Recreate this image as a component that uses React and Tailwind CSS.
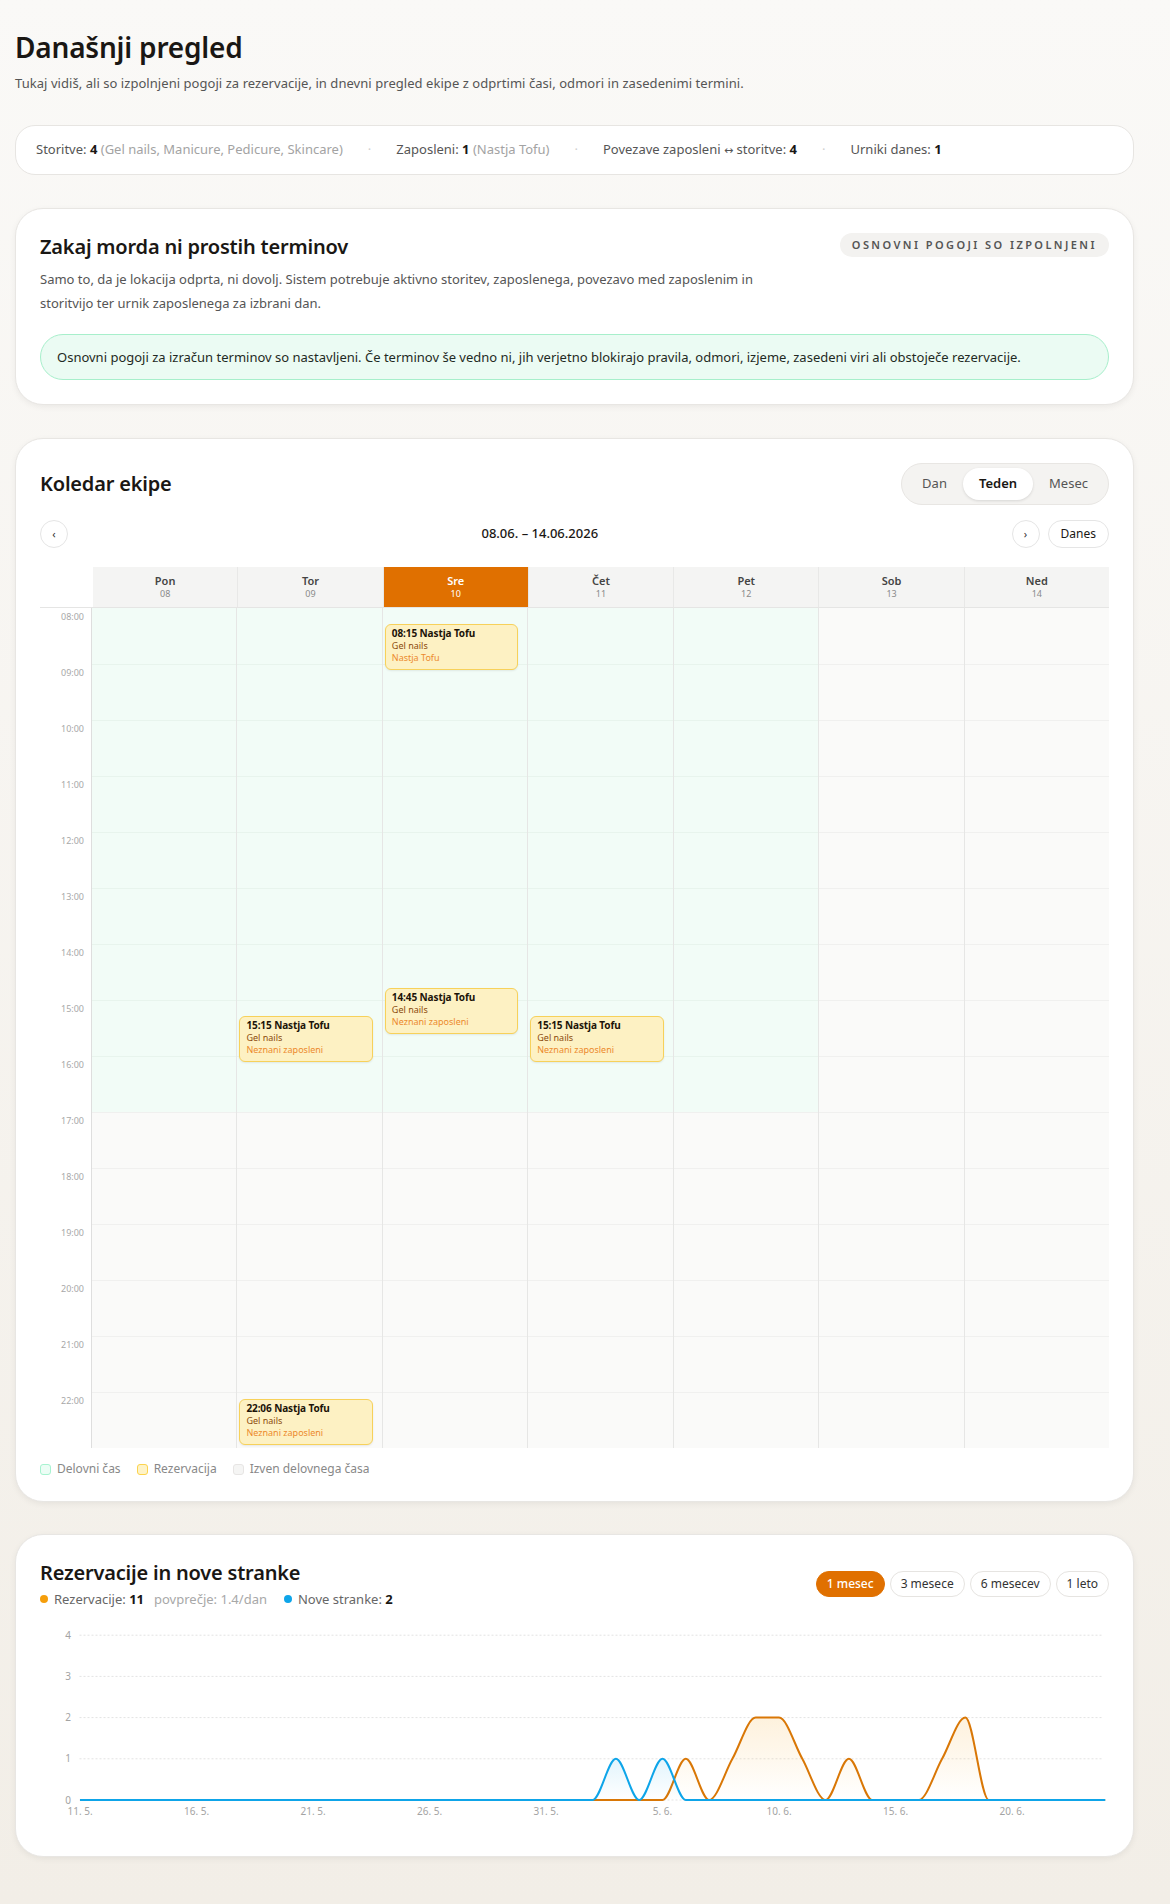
import React from 'react';

const DAYS = [
  { name: 'Pon', date: '08', work: true },
  { name: 'Tor', date: '09', work: true },
  { name: 'Sre', date: '10', work: true, today: true },
  { name: 'Čet', date: '11', work: true },
  { name: 'Pet', date: '12', work: true },
  { name: 'Sob', date: '13', work: false },
  { name: 'Ned', date: '14', work: false },
];

const HOURS = Array.from({ length: 15 }, (_, i) => 8 + i);
const HOUR_PX = 56;
const WORK_END = 17;

const EVENTS = [
  { day: 2, time: '08:15', service: 'Gel nails', staff: 'Nastja Tofu' },
  { day: 2, time: '14:45', service: 'Gel nails', staff: 'Neznani zaposleni' },
  { day: 1, time: '15:15', service: 'Gel nails', staff: 'Neznani zaposleni' },
  { day: 3, time: '15:15', service: 'Gel nails', staff: 'Neznani zaposleni' },
  { day: 1, time: '22:06', service: 'Gel nails', staff: 'Neznani zaposleni' },
];

// 45 days starting 11. 5.
const DAY_COUNT = 45;
const reservations = Array(DAY_COUNT).fill(0);
[[26, 1], [28, 1], [29, 2], [30, 2], [31, 1], [33, 1], [37, 1], [38, 2]].forEach(([i, v]) => { reservations[i] = v; });
const newClients = Array(DAY_COUNT).fill(0);
newClients[23] = 1;
newClients[25] = 1;

const X_LABELS = ['11. 5.', '16. 5.', '21. 5.', '26. 5.', '31. 5.', '5. 6.', '10. 6.', '15. 6.', '20. 6.'];
const RANGES = ['1 mesec', '3 mesece', '6 mesecev', '1 leto'];

const pad = (n) => String(n).padStart(2, '0');

function monotonePath(pts) {
  const n = pts.length;
  const t = new Array(n).fill(0);
  for (let i = 1; i < n - 1; i++) {
    const h0 = pts[i][0] - pts[i - 1][0];
    const h1 = pts[i + 1][0] - pts[i][0];
    const s0 = (pts[i][1] - pts[i - 1][1]) / h0;
    const s1 = (pts[i + 1][1] - pts[i][1]) / h1;
    const p = (s0 * h1 + s1 * h0) / (h0 + h1);
    t[i] = (Math.sign(s0) + Math.sign(s1)) * Math.min(Math.abs(s0), Math.abs(s1), 0.5 * Math.abs(p)) || 0;
  }
  let d = `M${pts[0][0]},${pts[0][1]}`;
  for (let i = 0; i < n - 1; i++) {
    const [x0, y0] = pts[i];
    const [x1, y1] = pts[i + 1];
    const dx = (x1 - x0) / 3;
    d += ` C${x0 + dx},${y0 + dx * t[i]} ${x1 - dx},${y1 - dx * t[i + 1]} ${x1},${y1}`;
  }
  return d;
}

function Chart() {
  const W = 1069;
  const H = 208;
  const x = (i) => 40 + i * 23.3;
  const y = (v) => 176 - v * 41.2;
  const base = y(0);

  const series = (data) => {
    const pts = data.map((v, i) => [x(i), y(v)]);
    const line = monotonePath(pts);
    const area = `${line} L${x(data.length - 1)},${base} L${x(0)},${base} Z`;
    return { line, area };
  };
  const res = series(reservations);
  const cli = series(newClients);

  return (
    <svg width={W} height={H} className="mt-[15px] block">
      <defs>
        <linearGradient id="resFill" x1="0" y1="0" x2="0" y2="1">
          <stop offset="0%" stopColor="#f59e0b" stopOpacity="0.14" />
          <stop offset="100%" stopColor="#f59e0b" stopOpacity="0" />
        </linearGradient>
        <linearGradient id="cliFill" x1="0" y1="0" x2="0" y2="1">
          <stop offset="0%" stopColor="#0ea5e9" stopOpacity="0.12" />
          <stop offset="100%" stopColor="#0ea5e9" stopOpacity="0" />
        </linearGradient>
      </defs>
      {[0, 1, 2, 3, 4].map((v) => (
        <g key={v}>
          <line x1={39.5} x2={1063} y1={y(v)} y2={y(v)} stroke="#e3e3e3" strokeDasharray="2 2" />
          <text x={31} y={y(v)} dy="0.35em" textAnchor="end" fontSize="10" fill="#a3a3a3">{v}</text>
        </g>
      ))}
      {X_LABELS.map((label, i) => (
        <text key={label} x={x(i * 5)} y={191} textAnchor="middle" fontSize="10" fill="#a3a3a3">{label}</text>
      ))}
      <path d={res.area} fill="url(#resFill)" />
      <path d={res.line} fill="none" stroke="#d97706" strokeWidth="2" />
      <path d={cli.area} fill="url(#cliFill)" />
      <path d={cli.line} fill="none" stroke="#0ea5e9" strokeWidth="2" />
    </svg>
  );
}

function EventCard({ ev }) {
  const [h, m] = ev.time.split(':').map(Number);
  const top = ((h - 8) * 60 + m) / 60 * HOUR_PX + 1.5;
  return (
    <div
      className="absolute left-[2px] right-[9px] h-[46px] rounded-md border border-[#f7d15a] bg-[#fdf1c3] px-[6px] pt-[2px] shadow-[0_1px_2px_rgba(0,0,0,0.08)]"
      style={{ top }}
    >
      <div className="text-[10px] font-bold leading-[13px] tracking-[-0.1px] text-[#1c1408]">{ev.time} Nastja Tofu</div>
      <div className="text-[9px] leading-[12px] text-[#8b4a0c]">{ev.service}</div>
      <div className="text-[9px] leading-[12px] text-[#ec8a2c]">{ev.staff}</div>
    </div>
  );
}

function Calendar() {
  return (
    <div className="mt-[19px]">
      <div className="flex border-b border-[#e5e5e4]">
        <div className="w-[53px] shrink-0" />
        {DAYS.map((d, i) => (
          <div
            key={d.name}
            className={`flex h-[40px] flex-1 flex-col items-center justify-center ${i > 0 ? 'border-l border-[#e8e8e7]' : ''} ${d.today ? 'bg-[#e07000] text-white' : 'bg-[#f4f4f3] text-[#444]'}`}
          >
            <div className="text-[11px] font-semibold leading-[14px]">{d.name}</div>
            <div className={`text-[9px] leading-[12px] ${d.today ? 'text-white' : 'text-[#8a8a8a]'}`}>{d.date}</div>
          </div>
        ))}
      </div>
      <div className="flex">
        <div className="w-[52px] shrink-0 border-r border-[#dedede] bg-white">
          {HOURS.map((h) => (
            <div key={h} className="h-[56px] pr-[7px] pt-[3px] text-right text-[9px] leading-[11px] text-[#a8a8a8]">
              {pad(h)}:00
            </div>
          ))}
        </div>
        {DAYS.map((d, di) => (
          <div key={d.name} className={`relative flex-1 ${di > 0 ? 'border-l border-[#e6e6e5]' : ''}`}>
            {HOURS.map((h, hi) => {
              const open = d.work && h < WORK_END;
              return (
                <div
                  key={h}
                  className={`h-[56px] ${hi > 0 ? 'border-t' : ''} ${open ? 'border-[#e8f4ed] bg-[#f2fcf7]' : 'border-[#f0f0ef] bg-[#fafaf9]'}`}
                />
              );
            })}
            {EVENTS.filter((e) => e.day === di).map((e) => (
              <EventCard key={e.time} ev={e} />
            ))}
          </div>
        ))}
      </div>
    </div>
  );
}

function LegendItem({ box, label }) {
  return (
    <div className="flex items-center gap-[6px]">
      <span className={`h-[11px] w-[11px] rounded-[3px] border ${box}`} />
      <span>{label}</span>
    </div>
  );
}

const card = 'rounded-[28px] border border-[#e8e6e3] bg-white shadow-[0_2px_6px_rgba(0,0,0,0.06)]';

export default function App() {
  return (
    <div className="min-h-[1904px] bg-gradient-to-b from-[#faf9f7] to-[#f2eee7] font-['Noto_Sans',sans-serif] text-[#1a1714]">
      <div className="ml-[15px] w-[1119px] pt-[29px]">
        <h1 className="text-[28px] font-semibold leading-9 tracking-[-0.2px]">Današnji pregled</h1>
        <p className="mt-2 text-[13px] leading-5 tracking-[0.05px] text-[#555]">
          Tukaj vidiš, ali so izpolnjeni pogoji za rezervacije, in dnevni pregled ekipe z odprtimi časi, odmori in zasedenimi termini.
        </p>

        <div className="mt-[32px] flex h-[50px] items-center gap-[25px] rounded-[20px] border border-[#e7e5e2] bg-white px-5 text-[13px] text-[#555]">
          <span>
            Storitve: <b className="font-bold text-[#1a1714]">4</b>{' '}
            <span className="text-[#a3a3a3]">(Gel nails, Manicure, Pedicure, Skincare)</span>
          </span>
          <span className="text-[#d0d0d0]">·</span>
          <span>
            Zaposleni: <b className="font-bold text-[#1a1714]">1</b> <span className="text-[#a3a3a3]">(Nastja Tofu)</span>
          </span>
          <span className="text-[#d0d0d0]">·</span>
          <span>
            Povezave zaposleni <span className="font-['DejaVu_Sans',sans-serif] text-[11px]">↔</span> storitve:{' '}
            <b className="font-bold text-[#1a1714]">4</b>
          </span>
          <span className="text-[#d0d0d0]">·</span>
          <span>
            Urniki danes: <b className="font-bold text-[#1a1714]">1</b>
          </span>
        </div>

        <section className={`mt-[33px] p-6 ${card}`}>
          <div className="flex items-start justify-between">
            <div>
              <h2 className="text-[20px] font-semibold leading-7 tracking-[-0.2px]">Zakaj morda ni prostih terminov</h2>
              <p className="mt-[6px] max-w-[735px] text-[13px] leading-6 text-[#555]">
                Samo to, da je lokacija odprta, ni dovolj. Sistem potrebuje aktivno storitev, zaposlenega, povezavo med zaposlenim in storitvijo ter urnik zaposlenega za izbrani dan.
              </p>
            </div>
            <span className="flex h-6 items-center rounded-full bg-[#f3f2f0] px-3 text-[11px] font-semibold tracking-[0.22em] text-[#555]">
              OSNOVNI POGOJI SO IZPOLNJENI
            </span>
          </div>
          <div className="mt-[19px] rounded-full border border-[#a7efcb] bg-[#ebfbf3] px-4 py-3 text-[13px] leading-5 text-[#1f2a24]">
            Osnovni pogoji za izračun terminov so nastavljeni. Če terminov še vedno ni, jih verjetno blokirajo pravila, odmori, izjeme, zasedeni viri ali obstoječe rezervacije.
          </div>
        </section>

        <section className={`mt-[33px] p-6 ${card}`}>
          <div className="flex items-center justify-between">
            <h2 className="text-[20px] font-semibold leading-7 tracking-[-0.2px]">Koledar ekipe</h2>
            <div className="flex items-center rounded-full border border-[#e8e6e3] bg-[#f4f3f1] p-1">
              <button className="h-8 rounded-full px-4 text-[13px] text-[#555]">Dan</button>
              <button className="h-8 rounded-full bg-white px-4 text-[13px] font-semibold text-[#1a1714] shadow-[0_1px_3px_rgba(0,0,0,0.12)]">
                Teden
              </button>
              <button className="h-8 rounded-full px-4 text-[13px] text-[#555]">Mesec</button>
            </div>
          </div>

          <div className="mt-[15px] flex items-center">
            <button className="flex h-7 w-7 items-center justify-center rounded-full border border-[#e5e5e5] bg-white text-[11px] text-[#333]">‹</button>
            <div className="flex-1 text-center text-[13px] font-medium text-[#1a1714]">08.06. – 14.06.2026</div>
            <div className="flex items-center gap-2">
              <button className="flex h-7 w-7 items-center justify-center rounded-full border border-[#e5e5e5] bg-white text-[11px] text-[#333]">›</button>
              <button className="h-7 rounded-full border border-[#e5e5e5] bg-white px-[12px] text-[12px] text-[#1a1714]">Danes</button>
            </div>
          </div>

          <Calendar />

          <div className="mt-[13px] flex items-center gap-4 text-[12px] leading-4 text-[#888]">
            <LegendItem box="border-[#a7f3d0] bg-[#ecfdf5]" label="Delovni čas" />
            <LegendItem box="border-[#fcd34d] bg-[#fef3c7]" label="Rezervacija" />
            <LegendItem box="border-[#e7e5e4] bg-[#f5f5f4]" label="Izven delovnega časa" />
          </div>
        </section>

        <section className={`mt-[32px] p-6 ${card}`}>
          <div className="flex items-center justify-between">
            <div>
              <h2 className="text-[20px] font-semibold leading-7 tracking-[-0.2px]">Rezervacije in nove stranke</h2>
              <div className="mt-0.5 flex items-center text-[13px] leading-5 text-[#666]">
                <span className="mr-[6px] h-2 w-2 rounded-full bg-[#f59e0b]" />
                <span>
                  Rezervacije: <b className="font-bold text-[#1a1714]">11</b>
                </span>
                <span className="ml-[10px] text-[#a8a8a8]">povprečje: 1.4/dan</span>
                <span className="ml-[17px] mr-[6px] h-2 w-2 rounded-full bg-[#0ea5e9]" />
                <span>
                  Nove stranke: <b className="font-bold text-[#1a1714]">2</b>
                </span>
              </div>
            </div>
            <div className="flex items-center gap-[5px]">
              {RANGES.map((r, i) => (
                <button
                  key={r}
                  className={`h-[26px] rounded-full border px-[10px] text-[12px] ${i === 0 ? 'border-[#e07000] bg-[#e07000] font-medium text-white' : 'border-[#e6e4e1] bg-white text-[#333]'}`}
                >
                  {r}
                </button>
              ))}
            </div>
          </div>
          <Chart />
        </section>
      </div>
    </div>
  );
}
